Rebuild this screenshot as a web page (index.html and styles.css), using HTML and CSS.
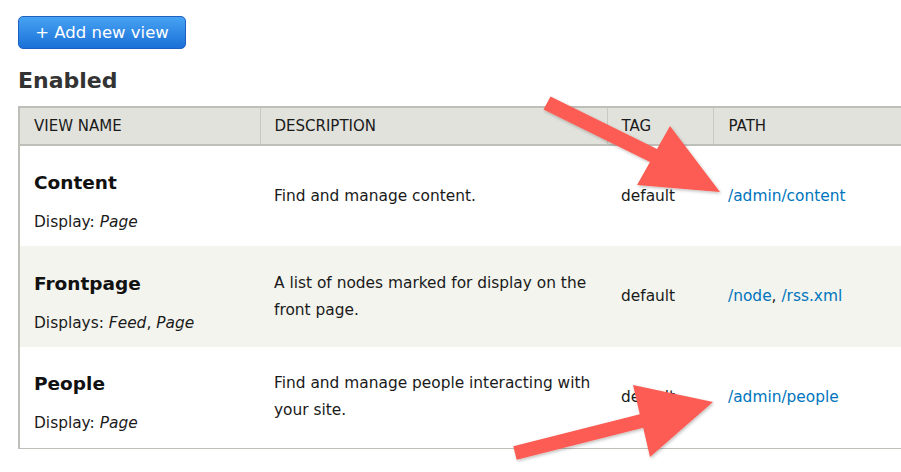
FILE: index.html
```html
<!DOCTYPE html>
<html>
<head>
<meta charset="utf-8">
<link rel="stylesheet" href="styles.css">
</head>
<body>
<div class="page">
  <a class="btn" href="#">+ Add new view</a>
  <h2 class="section-title">Enabled</h2>
  <table class="views">
    <colgroup>
      <col class="w-name">
      <col class="w-desc">
      <col class="w-tag">
      <col class="w-path">
    </colgroup>
    <thead>
      <tr>
        <th>View name</th>
        <th>Description</th>
        <th>Tag</th>
        <th class="c-path">Path</th>
      </tr>
    </thead>
    <tbody>
      <tr>
        <td><div class="name-block"><div class="vname">Content</div><div class="vdisp">Display: <em>Page</em></div></div></td>
        <td>Find and manage content.</td>
        <td>default</td>
        <td class="c-path"><a href="#">/admin/content</a></td>
      </tr>
      <tr class="alt">
        <td><div class="name-block"><div class="vname">Frontpage</div><div class="vdisp">Displays: <em>Feed</em>, <em>Page</em></div></div></td>
        <td>A list of nodes marked for display on the front page.</td>
        <td>default</td>
        <td class="c-path"><a href="#">/node</a>, <a href="#">/rss.xml</a></td>
      </tr>
      <tr>
        <td><div class="name-block"><div class="vname">People</div><div class="vdisp">Display: <em>Page</em></div></div></td>
        <td>Find and manage people interacting with your site.</td>
        <td>default</td>
        <td class="c-path"><a href="#">/admin/people</a></td>
      </tr>
    </tbody>
  </table>
</div>
<svg class="arrows" width="901" height="472" viewBox="0 0 901 472">
  <defs>
    <filter id="sh" x="-10%" y="-10%" width="130%" height="130%">
      <feDropShadow dx="1" dy="1.5" stdDeviation="1.5" flood-color="#000" flood-opacity="0.25"/>
    </filter>
  </defs>
  <polygon filter="url(#sh)" fill="#fc5c52" points="550.5,96.4 657,149 670,126 720,192 637,185 650,162 543.5,109.6"/>
  <polygon filter="url(#sh)" fill="#fc5c52" points="513.3,446.2 639.8,414.2 633,385 713,402 650,457 643.2,427.8 516.7,459.8"/>
</svg>
</body>
</html>
```

FILE: styles.css
```css
html, body {
  margin: 0;
  padding: 0;
  overflow: hidden;
  background: #fff;
}
body {
  width: 901px;
  height: 472px;
  position: relative;
  font-family: "DejaVu Sans", Verdana, sans-serif;
  color: #1a1a1a;
}
.page {
  padding: 16px 0 0 18px;
  width: 1000px;
}
.btn {
  display: inline-block;
  box-sizing: border-box;
  width: 168px;
  height: 33px;
  line-height: 31px;
  text-align: center;
  color: #fff;
  text-decoration: none;
  font-size: 16.5px;
  border: 1px solid #1d61c0;
  border-radius: 5px;
  background: linear-gradient(#47a3f3, #1a70d7);
}
.section-title {
  margin: 15px 0 0 0;
  font-size: 22px;
  line-height: 34px;
  font-weight: bold;
  color: #333;
  height: 42px;
}
.views {
  border-collapse: collapse;
  table-layout: fixed;
  width: 884px;
  border-left: 2px solid #bebfb9;
  border-bottom: 1px solid #bebfb9;
  font-size: 15.4px;
}
.w-name { width: 241px; }
.w-desc { width: 347px; }
.w-tag { width: 106px; }
.w-path { width: 190px; }
.views th {
  background: #e1e2dc;
  border-top: 2px solid #bebfb9;
  border-bottom: 2px solid #bebfb9;
  border-left: 1px solid #c8c9c3;
  text-align: left;
  font-weight: normal;
  text-transform: uppercase;
  font-size: 15px;
  height: 36px;
  padding: 0 14px;
  color: #1a1a1a;
}
.views th:first-child { border-left: none; }
.views td {
  height: 101px;
  padding: 0 14px;
  vertical-align: middle;
  line-height: 27px;
  box-sizing: border-box;
  white-space: normal;
}
.views tr.alt td { background: #f3f4ee; }
.views .c-path { padding-left: 15px; white-space: nowrap; }
.name-block { padding-top: 13px; }
.vname {
  font-weight: bold;
  font-size: 18.5px;
  line-height: 27px;
  color: #111;
}
.vdisp {
  margin-top: 13px;
  line-height: 27px;
}
.views a { color: #0074bd; text-decoration: none; }
.arrows {
  position: absolute;
  left: 0;
  top: 0;
  pointer-events: none;
}
```
